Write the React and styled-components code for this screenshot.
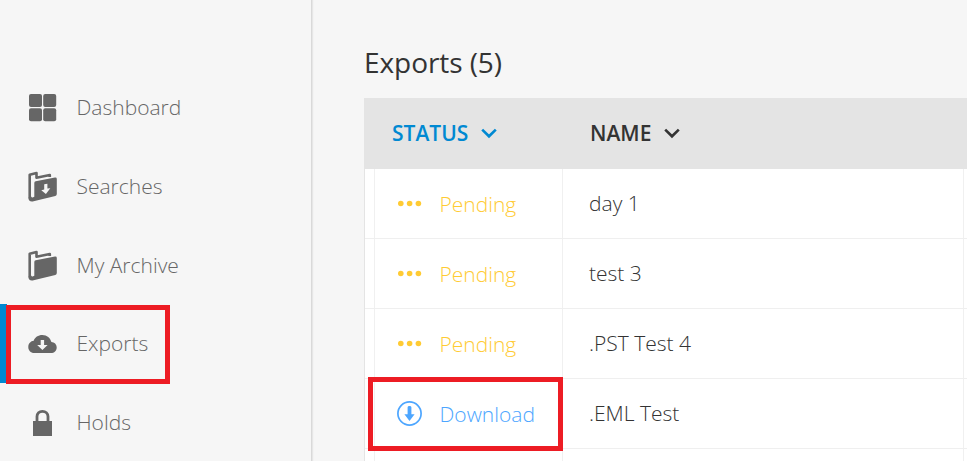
import React from "react";
import styled, { createGlobalStyle } from "styled-components";

const GlobalStyle = createGlobalStyle`
  * { box-sizing: border-box; }
  body { margin: 0; background: #fff; overflow: hidden; font-family: "Open Sans", "Noto Sans", sans-serif; }
`;
const Page = styled.div`
  display: flex;
  width: 967px;
  height: 461px;
  overflow: hidden;
  background: #f6f6f6;
`;
const Sidebar = styled.nav`
  position: relative;
  flex: none;
  width: 312px;
  padding-top: 67px;
  border-right: 1px solid #d9d9d9;
  box-shadow: 1px 0 1px #e6e6e6;
`;
const NavItem = styled.a`
  position: relative;
  display: flex;
  align-items: center;
  height: 79px;
  padding-left: 21px;
  border-left: 7px solid ${(p) => (p.$active ? "#0089d2" : "transparent")};
  color: #666;
`;
const NavLabel = styled.span`
  margin-left: 19.5px;
  padding-bottom: ${(p) => (p.$raised ? 2 : 0)}px;
  font-size: 21px;
  font-weight: 300;
  line-height: 30px;
  white-space: nowrap;
`;
const Icon = styled.svg`
  display: block;
  flex: none;
`;
const Highlight = styled.div`
  position: absolute;
  z-index: 2;
  left: ${(p) => p.$x}px;
  top: ${(p) => p.$y}px;
  width: ${(p) => p.$w}px;
  height: ${(p) => p.$h}px;
  border: 5px solid #ed1c24;
  pointer-events: none;
`;
const Main = styled.main`
  flex: none;
  width: 655px;
  padding: 42px 0 0 52px;
`;
const Title = styled.h1`
  height: 56px;
  margin: 0;
  font-size: 28px;
  font-weight: 400;
  line-height: 40px;
  color: #333;
  letter-spacing: -0.07px;
`;
const HeaderRow = styled.div`
  display: grid;
  grid-template-columns: 198px 1fr;
  align-items: center;
  height: 71px;
  padding-left: 28px;
  background: #e4e4e4;
`;
const HeaderCell = styled.div`
  display: flex;
  align-items: center;
  gap: 13px;
  font-size: 21px;
  font-weight: 600;
  line-height: 28px;
  color: ${(p) => (p.$sorted ? "#0089d2" : "#333")};
`;
const HeaderLabel = styled.span`
  padding-bottom: 2px;
`;
const Body = styled.div`
  border-left: 1px solid #e4e4e4;
  background: #fff;
`;
const Row = styled.div`
  display: grid;
  grid-template-columns: 10px 188px 401px 1fr;
  height: 70px;
  border-bottom: 1px solid #efefef;
`;
const Cell = styled.div`
  position: relative;
  display: flex;
  align-items: center;
  border-right: 1px solid #f0f0f0;
  &:last-child { border-right: 0; }
`;
const Status = styled(Cell)`
  padding-left: 22px;
  gap: 16.5px;
  color: ${(p) => p.$color};
`;
const CellText = styled.span`
  font-size: 21px;
  font-weight: 300;
  line-height: 30px;
  white-space: nowrap;
`;
const NameCell = styled(Cell)`
  padding: 0 0 2px 26px;
  color: #333;
`;

const DashboardIcon = () => (
  <Icon width="29" height="31" viewBox="0 0 29 31" fill="#666">
    <rect x="1" y="3" width="13" height="13" rx="2" />
    <rect x="15.2" y="3" width="13" height="13" rx="2" />
    <rect x="1" y="17.2" width="13" height="13" rx="2" />
    <rect x="15.2" y="17.2" width="13" height="13" rx="2" />
  </Icon>
);
const FolderIcon = ({ arrow }) => (
  <Icon width="29" height="33" viewBox="0 -2.3 29 33">
    <path d="M21.8 5.8 V3.7 L8.5 6.5 V1.7 L1.7 3.5 V27" fill="none" stroke="#666" strokeWidth="2.6" strokeLinejoin="round" />
    <path fill="#666" d="M6.3 11.6 Q6.3 10.2 7.7 9.9 L27 6.2 Q28.8 6 28.8 7.6 V22.8 Q28.8 24.2 27.3 24.6 L5.6 30 Q.4 31 .4 26.5 L3 25 Q3.2 26.4 4.6 26.1 L6.3 25.5 Z" />
    {arrow && <path fill="#f6f6f6" d="M16.2 13 L19.4 12.5 V17.3 L22.3 16.9 L17.9 22.8 L13.3 18.9 L16.2 18.3 Z" />}
  </Icon>
);
const CloudIcon = () => (
  <Icon width="29" height="20" viewBox="0 0 29 20">
    <path fill="#666" d="M6.3 19.1 C2.6 18.8.2 16.1.3 12.9 C.3 9.5 2.7 7 5.7 6.7 C6.8 3.1 10.2.9 14.3.9 C19 .9 22.4 4 23.4 8 C26.4 8.1 28.7 10.4 28.7 13.4 C28.7 16.7 26.2 19.1 23 19.1 Z" />
    <path fill="#f6f6f6" d="M12.7 6h3.4v5h3.5l-5.2 5.1L9.2 11h3.5z" />
  </Icon>
);
const LockIcon = () => (
  <Icon width="29" height="27" viewBox="0 0 29 27">
    <rect x="5" y="12" width="19" height="15" fill="#666" />
    <path d="M9 12.5 V7.6 C9 4.2 11.2 2.3 14.4 2.3 S20 4.2 20 7.6 V12.5" fill="none" stroke="#666" strokeWidth="2.8" />
  </Icon>
);
const ChevronIcon = () => (
  <Icon width="16" height="11" viewBox="0 0 16 11">
    <path d="M1.2 1.6 L8 8.3 L14.8 1.6" fill="none" stroke="currentColor" strokeWidth="2.6" />
  </Icon>
);
const DotsIcon = () => (
  <Icon width="26" height="26" viewBox="0 0 26 26" fill="#ffcb33">
    <circle cx="3.8" cy="12.5" r="2.8" />
    <circle cx="12.6" cy="12.5" r="2.8" />
    <circle cx="21.4" cy="12.5" r="2.8" />
  </Icon>
);
const DownloadIcon = () => (
  <Icon width="26" height="26" viewBox="0 0 26 26">
    <circle cx="12.5" cy="12.5" r="11.6" fill="none" stroke="#4da6ff" strokeWidth="1.7" />
    <path fill="#4da6ff" d="M10.6 6.2 Q10.6 5 12.5 5 T14.4 6.2 V13.2 H17.6 L12.5 20 L7.4 13.2 H10.6 Z" />
  </Icon>
);

const nav = [
  { label: "Dashboard", icon: <DashboardIcon /> },
  { label: "Searches", icon: <FolderIcon arrow /> },
  { label: "My Archive", icon: <FolderIcon /> },
  { label: "Exports", icon: <CloudIcon />, active: true, raised: true },
  { label: "Holds", icon: <LockIcon />, raised: true },
];
const rows = [
  { name: "day 1" },
  { name: "test 3" },
  { name: ".PST Test 4" },
  { name: ".EML Test", ready: true },
];

export default function App() {
  return (
    <>
      <GlobalStyle />
      <Page>
        <Sidebar>
          {nav.map((n) => (
            <NavItem key={n.label} $active={n.active}>
              {n.icon}
              <NavLabel $raised={n.raised}>{n.label}</NavLabel>
              {n.active && <Highlight $x={-1} $y={1} $w={164} $h={79} />}
            </NavItem>
          ))}
        </Sidebar>
        <Main>
          <Title>Exports (5)</Title>
          <HeaderRow>
            <HeaderCell $sorted><HeaderLabel>STATUS</HeaderLabel><ChevronIcon /></HeaderCell>
            <HeaderCell><HeaderLabel>NAME</HeaderLabel><ChevronIcon /></HeaderCell>
          </HeaderRow>
          <Body>
            {rows.map((r) => (
              <Row key={r.name}>
                <Cell />
                <Status $color={r.ready ? "#4da6ff" : "#ffcb33"}>
                  {r.ready ? <DownloadIcon /> : <DotsIcon />}
                  <CellText>{r.ready ? "Download" : "Pending"}</CellText>
                  {r.ready && <Highlight $x={-7} $y={-2} $w={195} $h={74} />}
                </Status>
                <NameCell><CellText>{r.name}</CellText></NameCell>
                <Cell />
              </Row>
            ))}
            <Row><Cell /><Cell /><Cell /><Cell /></Row>
          </Body>
        </Main>
      </Page>
    </>
  );
}
